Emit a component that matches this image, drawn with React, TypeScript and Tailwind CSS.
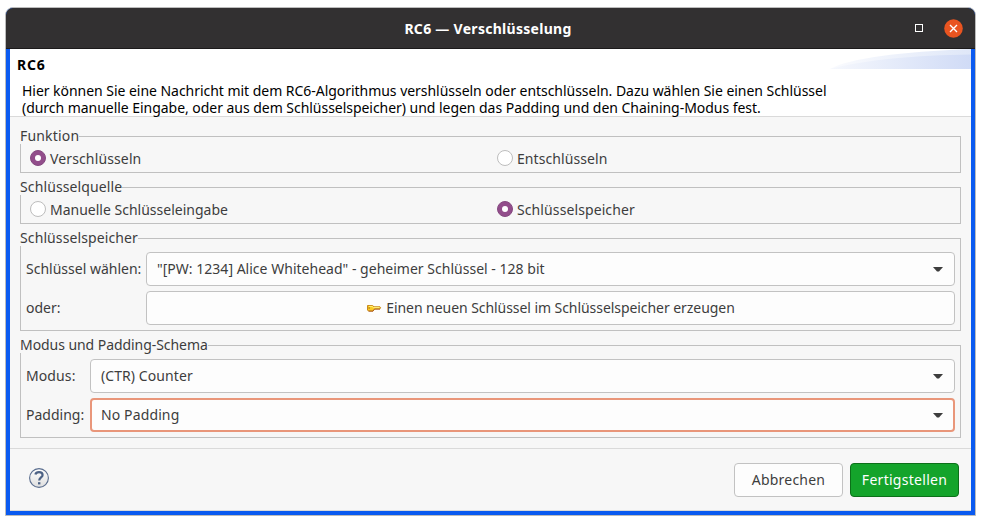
import type { ReactNode } from "react";

function Radio({ label, checked, className }: { label: string; checked?: boolean; className: string }) {
  return (
    <div className="flex items-center gap-1">
      <span
        className={
          checked
            ? "mb-0.5 flex size-4 items-center justify-center rounded-full border border-[#854980] bg-[#924d8b]"
            : "mb-0.5 flex size-4 items-center justify-center rounded-full border border-[#bdbdbd] bg-white"
        }
      >
        {checked && <span className="size-1.5 rounded-full bg-white" />}
      </span>
      <span className={`leading-5 ${className}`}>{label}</span>
    </div>
  );
}

function Group({
  title,
  className,
  titleClass,
  children,
}: {
  title: string;
  className: string;
  titleClass: string;
  children: ReactNode;
}) {
  return (
    <section className={`relative border border-[#c0c0c0] ${className}`}>
      <h2 className={`absolute -left-px -top-[11px] h-[18px] bg-[#f7f7f7] leading-5 ${titleClass}`}>{title}</h2>
      {children}
    </section>
  );
}

function Combo({ value, focused, className }: { value: string; focused?: boolean; className: string }) {
  return (
    <div
      className={`flex h-[34px] flex-1 items-center justify-between rounded-[4px] bg-[#fdfdfd] ${
        focused ? "border-2 border-[#e9967a] pl-[9px] pr-[10px]" : "border border-[#c2c2c2] pl-2.5 pr-[11px]"
      }`}
    >
      <span className={`leading-5 ${className}`}>{value}</span>
      <svg width="10" height="5" viewBox="0 0 10 5">
        <path d="M0 0H10L6 4.5H4Z" fill="#3d3d3d" />
      </svg>
    </div>
  );
}

function KeyIcon() {
  return (
    <svg width="16" height="10" viewBox="0 0 16 10" className="mr-1">
      <path
        d="M1.5 2.5H6.5L8 3.8H14L14.6 4.8L14 5.8H8.5L7 8H2.5L1.5 7Z"
        fill="#fccb22"
        stroke="#c98a1c"
        strokeWidth="1"
      />
      <path d="M3 3.4H6L7.5 4.6H13.5" stroke="#fff27a" fill="none" />
      <path d="M2.5 8.2H7L8.5 6.2H14" stroke="#a8501e" strokeWidth="0.8" fill="none" />
      <path d="M2.4 5H4" stroke="#9c6714" />
    </svg>
  );
}

function HelpIcon() {
  return (
    <svg width="20" height="20" viewBox="0 0 20 20" fill="none">
      <defs>
        <linearGradient id="help" x1="0" y1="0" x2="0" y2="1">
          <stop offset="0" stopColor="#ffffff" />
          <stop offset="1" stopColor="#dedede" />
        </linearGradient>
      </defs>
      <circle cx="10" cy="10" r="9.4" fill="url(#help)" stroke="#5a6d8e" strokeWidth="1.1" />
      <path d="M6.4 6.6C6.8 4.9 8.1 4.2 10 4.2C12.2 4.2 13.6 5.2 13.6 7C13.6 9.5 10.2 9.5 10.2 12.6" stroke="#4d6285" strokeWidth="2.2" />
      <path d="M9 14.2H11.4V16.4H9Z" fill="#4d6285" />
    </svg>
  );
}

export default function App() {
  return (
    <div className="h-[521px] w-[981px] overflow-hidden whitespace-nowrap bg-white pl-[5px] pt-[7px] font-['Noto_Sans',sans-serif] text-[14px] text-[#3d3d3d]">
      <div className="flex h-[509px] w-[971px] flex-col overflow-hidden rounded-t-[8px] border border-[#bcbcbc] bg-[#0a5af0]">
        <header className="flex h-[41px] shrink-0 items-center border-b border-[#1c1a1b] bg-[#323031] text-white">
          <div className="w-[90px]" />
          <h1 className="flex-1 pr-[5px] pt-0.5 text-center font-bold leading-5 tracking-[0.29px]">
            RC6 — Verschlüsselung
          </h1>
          <div className="flex w-[90px] items-center justify-end pr-3">
            <span className="mr-[21px] size-2 border border-white" />
            <svg width="19" height="19" viewBox="0 0 19 19">
              <circle cx="9.5" cy="9.5" r="9.3" fill="#e95420" />
              <path d="M6 6L13 13M13 6L6 13" stroke="white" strokeWidth="1.4" />
            </svg>
          </div>
        </header>
        <main className="mx-1 flex h-[462px] flex-col border-b border-[#d9d9d9] bg-[#f7f7f7]">
          <div className="flex h-[68px] justify-between border-b border-[#dadada] bg-white text-black">
            <div className="pt-[7px]">
              <h2 className="pl-[7px] font-bold leading-[18px] tracking-[0.8px]">RC6</h2>
              <p className="pl-3 pt-2 leading-[17px]">
                <span className="tracking-[-0.036px]">
                  Hier können Sie eine Nachricht mit dem RC6-Algorithmus vershlüsseln oder entschlüsseln. Dazu wählen
                  Sie einen Schlüssel
                </span>
                <br />
                <span className="tracking-[-0.038px]">
                  (durch manuelle Eingabe, oder aus dem Schlüsselspeicher) und legen das Padding und den
                  Chaining-Modus fest.
                </span>
              </p>
            </div>
            <svg width="141" height="20" viewBox="0 0 141 20" className="-ml-36">
              <defs>
                <linearGradient id="wave">
                  <stop offset="0" stopColor="#fafbfe" />
                  <stop offset="1" stopColor="#dfe7f8" />
                </linearGradient>
                <linearGradient id="waveFront">
                  <stop offset="0" stopColor="#f6f8fd" />
                  <stop offset="1" stopColor="#d0dbf6" />
                </linearGradient>
              </defs>
              <path d="M0 20C20 9 70 3 141 0V20Z" fill="url(#wave)" />
              <path d="M0 20C35 11 85 6 141 5.5V20Z" fill="url(#waveFront)" />
            </svg>
          </div>
          <div className="flex h-[332px] flex-col gap-[14px] border-b border-[#dadada] px-2.5 pt-[19px]">
            <Group title="Funktion" className="h-[37px]" titleClass="tracking-[0.18px]">
              <div className="grid grid-cols-[467px_1fr] pl-[9px] pt-3">
                <Radio label="Verschlüsseln" checked className="tracking-[0.13px]" />
                <Radio label="Entschlüsseln" className="tracking-[0.08px]" />
              </div>
            </Group>
            <Group title="Schlüsselquelle" className="h-[37px]" titleClass="tracking-[0.12px]">
              <div className="grid grid-cols-[467px_1fr] pl-[9px] pt-3">
                <Radio label="Manuelle Schlüsseleingabe" className="" />
                <Radio label="Schlüsselspeicher" checked className="tracking-[0.1px]" />
              </div>
            </Group>
            <Group title="Schlüsselspeicher" className="h-[93px]" titleClass="tracking-[0.11px]">
              <div className="flex flex-col gap-[5px] px-[5px] pt-[13px]">
                <div className="flex items-center">
                  <span className="w-[120px] pb-0.5">Schlüssel wählen:</span>
                  <Combo
                    value={'"[PW: 1234] Alice Whitehead" - geheimer Schlüssel - 128 bit'}
                    className="tracking-[0.015px]"
                  />
                </div>
                <div className="flex items-center">
                  <span className="w-[120px] pb-0.5">oder:</span>
                  <button className="flex h-[34px] flex-1 items-center justify-center rounded-[4px] border border-[#c2c2c2] bg-[#fdfdfd]">
                    <KeyIcon />
                    <span className="leading-5 tracking-[-0.06px]">
                      Einen neuen Schlüssel im Schlüsselspeicher erzeugen
                    </span>
                  </button>
                </div>
              </div>
            </Group>
            <Group title="Modus und Padding-Schema" className="h-[93px]" titleClass="tracking-[-0.06px]">
              <div className="flex flex-col gap-[5px] px-[5px] pt-[13px]">
                <div className="flex items-center">
                  <span className="w-16 pb-0.5 tracking-[0.1px]">Modus:</span>
                  <Combo value="(CTR) Counter" className="tracking-[0.08px]" />
                </div>
                <div className="flex items-center">
                  <span className="w-16 pb-0.5">Padding:</span>
                  <Combo value="No Padding" focused className="tracking-[0.12px]" />
                </div>
              </div>
            </Group>
          </div>
          <footer className="flex flex-1 items-center pl-[19px] pr-3">
            <span className="mb-1">
              <HelpIcon />
            </span>
            <div className="ml-auto flex gap-[7px]">
              <button className="h-[34px] w-[109px] rounded-[4px] border border-[#c2c2c2] bg-[#fdfdfd] tracking-[0.2px]">
                Abbrechen
              </button>
              <button className="h-[34px] w-[109px] rounded-[4px] border border-[#0c7019] bg-[#14a42b] tracking-[0.28px] text-white">
                Fertigstellen
              </button>
            </div>
          </footer>
        </main>
      </div>
    </div>
  );
}
